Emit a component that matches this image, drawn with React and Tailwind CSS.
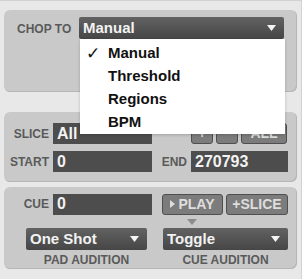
import React from "react";

const font = { fontFamily: '"Liberation Sans", Arial, sans-serif' };

const Caret = () => (
  <svg width="9" height="6" viewBox="0 0 9 6" className="shrink-0">
    <path d="M0 0 L9 0 L4.5 6 Z" fill="#f4f4f4" />
  </svg>
);

const Select = ({ value, className = "" }) => (
  <div
    className={`h-[22px] flex items-center justify-between pl-[4px] pr-[8px] rounded-[2px] bg-gradient-to-b from-[#626262] to-[#464646] text-[15px] font-bold text-[#f2f2f2] ${className}`}
  >
    <span>{value}</span>
    <Caret />
  </div>
);

const Field = ({ value, className = "" }) => (
  <div
    className={`h-[21px] flex items-center pl-[4px] bg-[#4d4d4d] text-[16px] font-bold text-[#f2f2f2] ${className}`}
  >
    {value}
  </div>
);

const Label = ({ children, className = "" }) => (
  <div className={`text-[12px] font-bold text-[#5a5a5a] leading-none ${className}`}>{children}</div>
);

const Btn = ({ children, className = "" }) => (
  <div
    className={`h-[21px] flex items-center justify-center rounded-[3px] border-[1.5px] border-[#4f4f4f] bg-[#7c7c7c] text-[14px] font-bold text-[#dedede] ${className}`}
  >
    {children}
  </div>
);

const panel = "w-[293px] rounded-[6px] bg-[#c9c9c9] shadow-[inset_-1px_-1px_0_#b6b6b6]";

export default function App() {
  const items = ["Manual", "Threshold", "Regions", "BPM"];
  return (
    <div
      style={font}
      className="w-[302px] h-[279px] bg-[#e8e8e8] border-t border-r border-[#d2d2d2] pt-[9px] pl-[4px]"
    >
      {/* chop to */}
      <div className={`${panel} h-[82px] relative pt-[7px] pl-[13px] flex items-start`}>
        <Label className="w-[62px] mt-[6px]">CHOP TO</Label>
        <Select value="Manual" className="w-[205px]" />

        <div className="absolute left-[76px] top-[29px] w-[205px] h-[95px] z-10 bg-white shadow-[0_1px_3px_rgba(0,0,0,0.2)] pt-[3px]">
          {items.map((it, i) => (
            <div key={it} className="h-[23px] flex items-center text-[15px] font-bold text-[#111]">
              <span className="w-[28px] pl-[6px] text-[17px] font-bold" style={{ fontFamily: '"DejaVu Sans", sans-serif' }}>
                {i === 0 ? "✓" : ""}
              </span>
              <span>{it}</span>
            </div>
          ))}
        </div>
      </div>

      {/* slice */}
      <div className={`${panel} h-[70px] mt-[20px] pt-[11px]`}>
        <div className="grid grid-cols-[45px_99px_31px_97px] gap-x-[4px] gap-y-[7px] items-center">
          <Label className="text-right">SLICE</Label>
          <Field value="All" />
          <div />
          <div className="flex gap-[3px]">
            <Btn className="w-[22px]">+</Btn>
            <Btn className="w-[22px]">−</Btn>
            <Btn className="w-[46px] text-[12px]">ALL</Btn>
          </div>
          <Label className="text-right">START</Label>
          <Field value="0" />
          <Label className="text-right">END</Label>
          <Field value="270793" className="pl-[3px]" />
        </div>
      </div>

      {/* cue */}
      <div className={`${panel} h-[82px] mt-[5px] pt-[6px]`}>
        <div className="flex items-center h-[22px]">
          <Label className="w-[45px] text-right">CUE</Label>
          <Field value="0" className="w-[99px] ml-[4px]" />
          <Btn className="w-[61px] ml-[10px] gap-[3px]">
            <svg width="5" height="8" viewBox="0 0 5 8">
              <path d="M0 0 L5 4 L0 8 Z" fill="#dedede" />
            </svg>
            <span>PLAY</span>
          </Btn>
          <Btn className="w-[62px] ml-[3px]">+SLICE</Btn>
        </div>
        <div className="h-[13px] flex items-center pl-[183px]">
          <svg width="10" height="6" viewBox="0 0 10 6">
            <path d="M0 0 L10 0 L5 6 Z" fill="#8c8c8c" />
          </svg>
        </div>
        <div className="flex">
          <div className="w-[121px] ml-[22px] flex flex-col items-center">
            <Select value="One Shot" className="w-full" />
            <Label className="mt-[4px] text-[11.5px]">PAD AUDITION</Label>
          </div>
          <div className="w-[125px] ml-[16px] flex flex-col items-center">
            <Select value="Toggle" className="w-full" />
            <Label className="mt-[4px] text-[11.5px]">CUE AUDITION</Label>
          </div>
        </div>
      </div>
    </div>
  );
}
